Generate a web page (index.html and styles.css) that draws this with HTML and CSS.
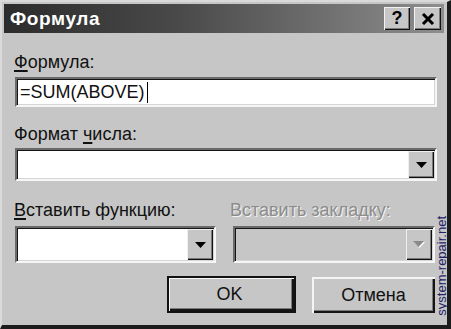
FILE: index.html
```html
<!DOCTYPE html>
<html lang="ru">
<head>
<meta charset="utf-8">
<title>Формула</title>
<link rel="stylesheet" href="styles.css">
</head>
<body>
<div class="window">
  <div class="titlebar">
    <span class="title">Формула</span>
    <div class="tbtns">
      <span class="tbtn help">?</span>
      <span class="tbtn close"><svg width="14" height="12" viewBox="0 0 14 12"><path d="M2 1 L12 11 M12 1 L2 11" stroke="#000" stroke-width="3" fill="none"/></svg></span>
    </div>
  </div>
  <div class="content">
    <div class="lbl first"><u>Ф</u>ормула:</div>
    <div class="field input"><span class="val">=SUM(ABOVE)</span><span class="caret"></span></div>
    <div class="lbl second">Формат <u>ч</u>исла:</div>
    <div class="field combo wide">
      <span class="dd"><svg width="11" height="6" viewBox="0 0 11 6"><path d="M0 0 H11 L5.5 6 Z" fill="#000"/></svg></span>
    </div>
    <div class="row2">
      <div class="col">
        <div class="lbl third"><u>В</u>ставить функцию:</div>
        <div class="field combo tall">
          <span class="dd"><svg width="11" height="6" viewBox="0 0 11 6"><path d="M0 0 H11 L5.5 6 Z" fill="#000"/></svg></span>
        </div>
      </div>
      <div class="col disabled">
        <div class="lbl third">Вставить закладку:</div>
        <div class="field combo tall">
          <span class="dd"><svg width="12" height="7" viewBox="0 0 12 7"><path d="M1 1 H12 L6.5 7 Z" fill="#fff"/><path d="M0 0 H11 L5.5 6 Z" fill="#8a8a8a"/></svg></span>
        </div>
      </div>
    </div>
    <div class="buttons">
      <div class="btn default">OK</div>
      <div class="btn cancel">Отмена</div>
    </div>
  </div>
  <div class="watermark">system-repair.net</div>
</div>
</body>
</html>
```
FILE: styles.css
```css
html, body {
  margin: 0;
  padding: 0;
  background: #c6c6c6;
}
.window {
  position: relative;
  box-sizing: border-box;
  width: 451px;
  height: 329px;
  background: #c6c6c6;
  border-style: solid;
  border-width: 2px 4px 4px 2px;
  border-color: #dadada #1c1c1c #1c1c1c #dadada;
  padding: 2px 3px 0 2px;
  font-family: "Liberation Sans", Arial, sans-serif;
  color: #111;
  overflow: hidden;
}
.titlebar {
  height: 29px;
  display: flex;
  justify-content: space-between;
  align-items: flex-start;
  background: linear-gradient(to right, #2c2c2c 0%, #4a4a4a 40%, #8e8e8e 100%);
}
.title {
  color: #fff;
  font-weight: bold;
  font-size: 19px;
  line-height: 29px;
  padding-left: 6px;
  letter-spacing: 0.6px;
}
.tbtns {
  display: flex;
  gap: 4px;
  margin-top: 3px;
  margin-right: 3px;
}
.tbtn {
  box-sizing: border-box;
  width: 26px;
  height: 23px;
  background: #c6c6c6;
  box-shadow: inset 1px 1px #f2f2f2, inset -1px -1px #111, inset -2px -2px #7c7c7c;
  display: flex;
  align-items: center;
  justify-content: center;
}
.tbtn.close { width: 27px; }
.tbtn.help {
  font-weight: bold;
  font-size: 18px;
  line-height: 23px;
  color: #000;
}
.content {
  padding: 0 7px 0 11px;
}
.lbl {
  font-size: 18px;
  line-height: 20px;
  white-space: nowrap;
}
.lbl u {
  text-decoration-thickness: 2px;
  text-underline-offset: 2px;
}
.lbl.first { margin: 19px 0 5px -1px; }
.lbl.second { margin: 17px 0 4px -1px; }
.lbl.third { margin: 19px 0 6px -1px; }
.field {
  box-sizing: border-box;
  background: #fff;
  border-style: solid;
  border-width: 2px;
  border-color: #6a6a6a #f6f6f6 #f6f6f6 #6a6a6a;
  box-shadow: inset 1px 1px #151515, inset -1px -1px #d6d6d6;
  display: flex;
  align-items: center;
  justify-content: flex-end;
}
.field.input {
  height: 30px;
  justify-content: flex-start;
  padding-left: 3px;
  font-size: 18px;
}
.caret {
  display: inline-block;
  width: 1px;
  height: 21px;
  background: #000;
  margin-left: 2px;
}
.field.combo.wide { height: 33px; }
.field.combo.tall { height: 37px; }
.combo {
  padding: 1px;
  align-items: stretch;
}
.dd {
  width: 26px;
  background: #c6c6c6;
  box-shadow: inset 1px 1px #f0f0f0, inset -1px -1px #111, inset -2px -2px #7a7a7a;
  display: flex;
  align-items: center;
  justify-content: center;
}
.row2 {
  display: grid;
  grid-template-columns: 201px 202px;
  column-gap: 17px;
}
.disabled .lbl {
  color: #8c8c8c;
  text-shadow: 1px 1px #f4f4f4;
  margin-left: -3px;
}
.disabled .field {
  background: #c6c6c6;
}
.buttons {
  display: flex;
  justify-content: flex-end;
  align-items: flex-end;
  gap: 16px;
  margin-top: 13px;
  padding-right: 2px;
}
.btn {
  box-sizing: border-box;
  height: 36px;
  display: flex;
  align-items: center;
  justify-content: center;
  font-size: 18px;
  background: #c6c6c6;
  box-shadow: inset 2px 2px #f4f4f4, inset -2px -2px #151515, inset -3px -3px #7a7a7a;
}
.btn.default {
  width: 129px;
  height: 37px;
  border: 2px solid #111;
  box-shadow: inset 1px 1px #f4f4f4, inset -2px -2px #151515, inset -3px -3px #7a7a7a;
  padding-right: 4px;
}
.btn.cancel {
  width: 123px;
}
.watermark {
  position: absolute;
  left: 433px;
  top: 214px;
  writing-mode: vertical-rl;
  transform: rotate(180deg);
  font-family: "Liberation Sans", Arial, sans-serif;
  font-size: 13px;
  line-height: 14px;
  color: #1f2266;
  white-space: nowrap;
}
```
